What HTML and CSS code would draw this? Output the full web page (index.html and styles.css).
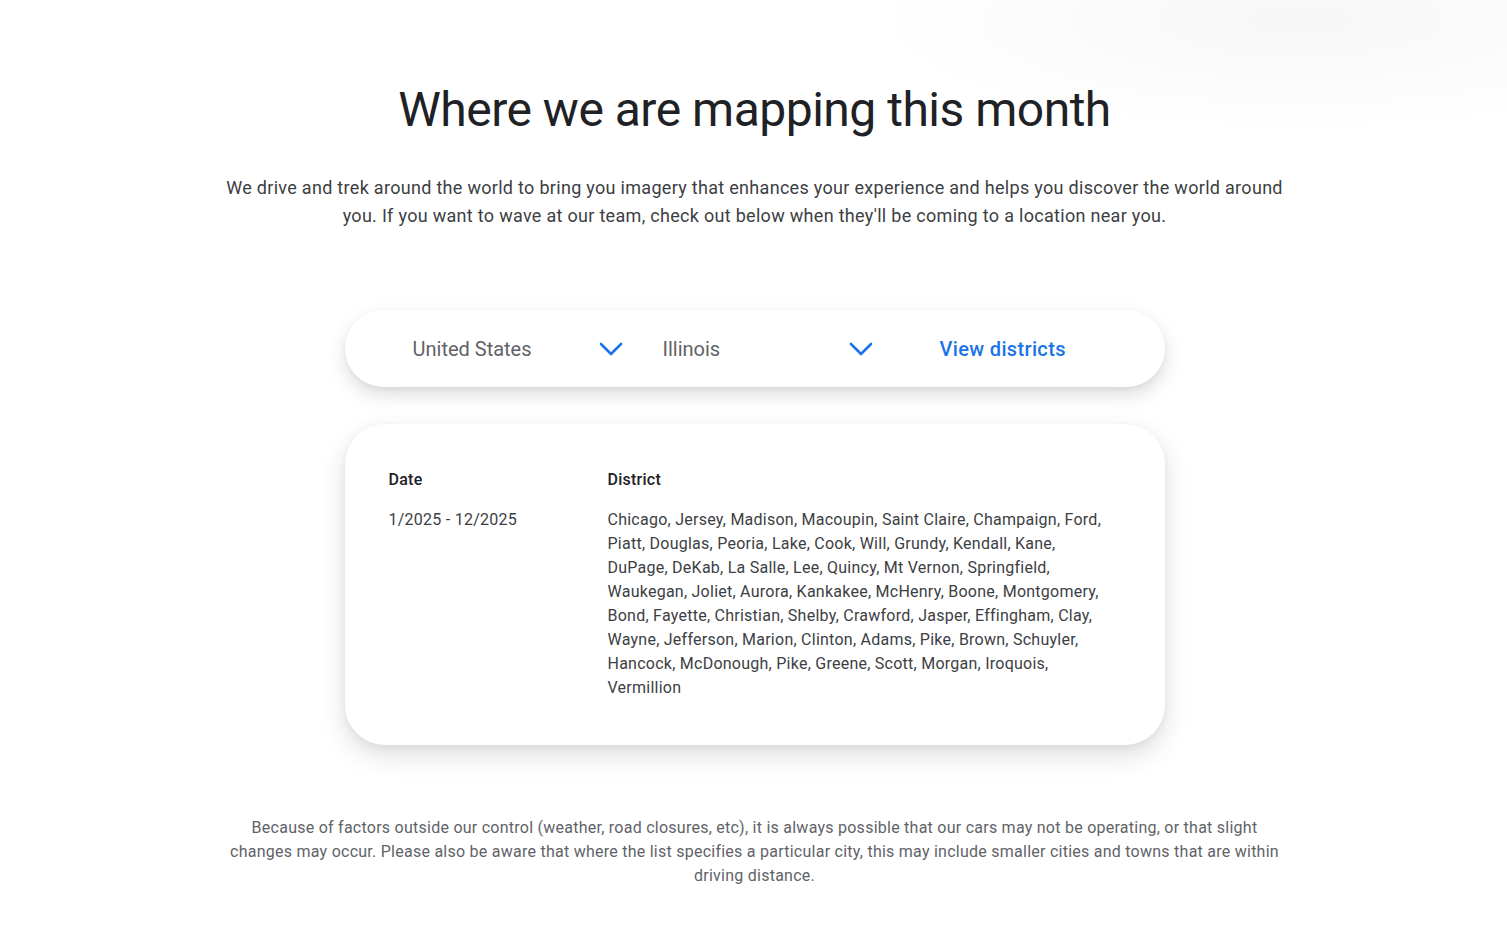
FILE: index.html
```html
<!DOCTYPE html>
<html lang="en">
<head>
<meta charset="utf-8">
<title>Where we are mapping this month</title>
<link rel="stylesheet" href="styles.css">
</head>
<body>
<main class="page">
  <h1 class="title">Where we are mapping this month</h1>
  <p class="intro">We drive and trek around the world to bring you imagery that enhances your experience and helps you discover the world around you. If you want to wave at our team, check out below when they'll be coming to a location near you.</p>

  <div class="selector">
    <div class="select select-country">
      <span class="select-label">United States</span>
      <svg class="chev" width="24" height="14" viewBox="0 0 24 14"><path d="M2 2 L12 12 L22 2" fill="none" stroke="#1a73e8" stroke-width="2.6" stroke-linecap="round" stroke-linejoin="round"/></svg>
    </div>
    <div class="select select-state">
      <span class="select-label">Illinois</span>
      <svg class="chev" width="24" height="14" viewBox="0 0 24 14"><path d="M2 2 L12 12 L22 2" fill="none" stroke="#1a73e8" stroke-width="2.6" stroke-linecap="round" stroke-linejoin="round"/></svg>
    </div>
    <a class="view-link" href="#">View districts</a>
  </div>

  <section class="table-card">
    <div class="row head">
      <div class="col-date">Date</div>
      <div class="col-district">District</div>
    </div>
    <div class="row">
      <div class="col-date">1/2025 - 12/2025</div>
      <div class="col-district">Chicago, Jersey, Madison, Macoupin, Saint Claire, Champaign, Ford, Piatt, Douglas, Peoria, Lake, Cook, Will, Grundy, Kendall, Kane, DuPage, DeKab, La Salle, Lee, Quincy, Mt Vernon, Springfield, Waukegan, Joliet, Aurora, Kankakee, McHenry, Boone, Montgomery, Bond, Fayette, Christian, Shelby, Crawford, Jasper, Effingham, Clay, Wayne, Jefferson, Marion, Clinton, Adams, Pike, Brown, Schuyler, Hancock, McDonough, Pike, Greene, Scott, Morgan, Iroquois, Vermillion</div>
    </div>
  </section>

  <p class="note">Because of factors outside our control (weather, road closures, etc), it is always possible that our cars may not be operating, or that slight changes may occur. Please also be aware that where the list specifies a particular city, this may include smaller cities and towns that are within driving distance.</p>
</main>
</body>
</html>
```

FILE: styles.css
```css
html, body {
  margin: 0;
  padding: 0;
}
body {
  background: #ffffff;
  font-family: Roboto, "Noto Sans", Arial, sans-serif;
  color: #202124;
}
.page {
  display: flex;
  flex-direction: column;
  align-items: center;
  padding-top: 80px;
  padding-bottom: 60px;
  padding-left: 2px;
  background: radial-gradient(ellipse 420px 110px at 1300px 20px, rgba(240, 241, 243, 0.6), rgba(255, 255, 255, 0) 100%);
}
.title {
  margin: 0;
  font-size: 48px;
  line-height: 60px;
  font-weight: 400;
  letter-spacing: -0.5px;
  color: #202124;
}
.intro {
  margin: 34px 0 0;
  width: 1070px;
  text-align: center;
  font-size: 18px;
  line-height: 28px;
  color: #3c4043;
  letter-spacing: 0.3px;
}
.selector {
  margin-top: 80px;
  width: 820px;
  height: 77px;
  box-sizing: border-box;
  border-radius: 39px;
  background: #fff;
  box-shadow: 0 8px 18px rgba(60, 64, 67, 0.18), 0 2px 4px rgba(60, 64, 67, 0.06);
  display: flex;
  align-items: center;
  padding-left: 68px;
}
.select {
  display: flex;
  align-items: center;
  justify-content: space-between;
  width: 210px;
}
.select-state {
  margin-left: 40px;
}
.select-label {
  font-size: 20px;
  color: #5f6368;
  letter-spacing: 0;
}
.chev {
  display: block;
}
.view-link {
  margin-left: 67px;
  font-size: 20px;
  font-weight: 500;
  color: #1a73e8;
  text-decoration: none;
  letter-spacing: 0.35px;
}
.table-card {
  margin-top: 37px;
  width: 820px;
  box-sizing: border-box;
  border-radius: 40px;
  background: #fff;
  box-shadow: 0 10px 24px rgba(60, 64, 67, 0.18), 0 2px 6px rgba(60, 64, 67, 0.06);
  padding: 44px 44px 45px;
}
.row {
  display: flex;
  font-size: 16px;
  line-height: 24px;
  color: #3c4043;
  letter-spacing: 0.25px;
}
.row.head {
  font-weight: 500;
  color: #202124;
  margin-bottom: 16px;
}
.col-date {
  width: 219px;
  flex: none;
}
.col-district {
  width: 500px;
}
.note {
  margin: 71px 0 0;
  width: 1060px;
  text-align: center;
  font-size: 16px;
  line-height: 24px;
  color: #5f6368;
  letter-spacing: 0.25px;
}
```
